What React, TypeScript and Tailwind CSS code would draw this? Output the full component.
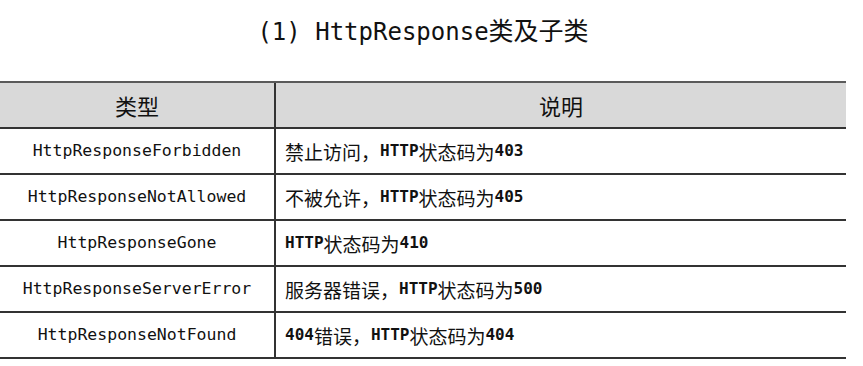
const ROWS: { name: string; desc: [string, boolean][] }[] = [
  { name: "HttpResponseForbidden", desc: [["禁止访问，", false], ["HTTP", true], ["状态码为", false], ["403", true]] },
  { name: "HttpResponseNotAllowed", desc: [["不被允许，", false], ["HTTP", true], ["状态码为", false], ["405", true]] },
  { name: "HttpResponseGone", desc: [["HTTP", true], ["状态码为", false], ["410", true]] },
  { name: "HttpResponseServerError", desc: [["服务器错误，", false], ["HTTP", true], ["状态码为", false], ["500", true]] },
  { name: "HttpResponseNotFound", desc: [["404", true], ["错误，", false], ["HTTP", true], ["状态码为", false], ["404", true]] },
];

const MONO = "font-['DejaVu_Sans_Mono','Noto_Sans_CJK_SC',monospace]";
const CJK = "font-['Noto_Sans_CJK_SC',sans-serif]";

export default function App() {
  return (
    <div className="h-[366px] w-[863px] overflow-hidden bg-white text-[#111]">
      <div className="w-[846px]">
        {/* Title */}
        <div className="flex h-[60px] items-center justify-center">
          <h1 className={`text-[24px] leading-none ${MONO}`}>
            (1)&nbsp;HttpResponse<span className={`text-[25px] ${CJK}`}>类及子类</span>
          </h1>
        </div>

        {/* Table */}
        <div className="mt-[21px]">
          <div className="flex h-[48px] border-y-2 border-t-[#5a5a5a] border-b-[#333] bg-[#d9d9d9]">
            <div className={`flex w-[276px] items-center justify-center border-r-2 border-[#333] text-[22px] ${CJK}`}>
              类型
            </div>
            <div className={`flex flex-1 items-center justify-center text-[22px] ${CJK}`}>说明</div>
          </div>
          {ROWS.map((r) => (
            <div key={r.name} className="flex h-[46px] border-b-2 border-[#333]">
              <div className={`flex w-[276px] items-center justify-center border-r-2 border-[#333] text-[16.5px] ${MONO}`}>
                {r.name}
              </div>
              <div className="flex flex-1 items-center pl-[9px] text-[19px] leading-none">
                {r.desc.map(([t, latin], i) =>
                  latin ? (
                    <span key={i} className={`text-[16px] font-bold ${MONO}`}>{t}</span>
                  ) : (
                    <span key={i} className={CJK}>{t}</span>
                  )
                )}
              </div>
            </div>
          ))}
        </div>
      </div>
    </div>
  );
}
